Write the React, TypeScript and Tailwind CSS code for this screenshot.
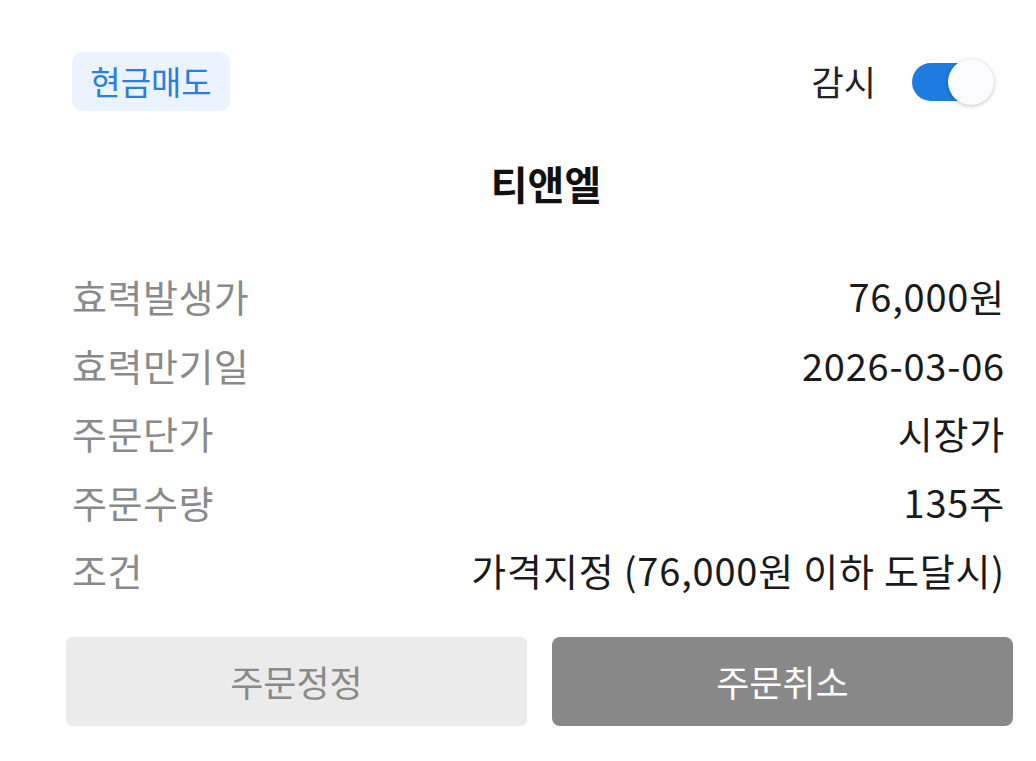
import React, { useState } from "react";

const rows: { label: string; value: string }[] = [
  { label: "효력발생가", value: "76,000원" },
  { label: "효력만기일", value: "2026-03-06" },
  { label: "주문단가", value: "시장가" },
  { label: "주문수량", value: "135주" },
  { label: "조건", value: "가격지정 (76,000원 이하 도달시)" },
];

const App: React.FC = () => {
  const [watch, setWatch] = useState(true);

  return (
    <div
      className="min-h-screen w-[1036px] bg-white pt-[52px]"
      style={{ fontFamily: '"Noto Sans CJK KR", "Noto Sans", sans-serif' }}
    >
      {/* header */}
      <div className="ml-[72px] mr-[40px] flex h-[59px] items-center justify-between">
        <span className="flex h-[59px] w-[158px] items-center justify-center rounded-[10px] bg-[#ebf4fe] text-[33px] text-[#2a7de1]">
          현금매도
        </span>
        <div className="flex items-center">
          <span className="mr-[35px] text-[35px] text-[#222]">감시</span>
          <button
            onClick={() => setWatch(!watch)}
            className="relative h-[46px] w-[85px]"
          >
            <span
              className={`absolute left-[1px] top-[4px] h-[38px] w-[76px] rounded-full ${
                watch ? "bg-[#1e7be0]" : "bg-[#c8c8c8]"
              }`}
            />
            <span
              className={`absolute top-0 h-[46px] w-[46px] rounded-full bg-[#fbfbfd] shadow-[0_1px_4px_rgba(0,0,0,0.25)] ${
                watch ? "left-[37px]" : "left-0"
              }`}
            />
          </button>
        </div>
      </div>

      {/* title */}
      <h1 className="ml-[72px] mr-[31px] mt-[42px] h-[60px] pl-[15px] text-center text-[40px] font-bold leading-[60px] text-[#111]">
        티앤엘
      </h1>

      {/* info rows */}
      <div className="ml-[72px] mr-[31px] mt-[49px]">
        {rows.map((r) => (
          <div
            key={r.label}
            className="flex h-[68.5px] items-center justify-between text-[38px] leading-[68.5px]"
          >
            <span className="tracking-[0.5px] text-[#8a8a8a]">{r.label}</span>
            <span className="tracking-[0.8px] text-[#1a1a1a]">{r.value}</span>
          </div>
        ))}
      </div>

      {/* buttons */}
      <div className="ml-[66px] mr-[23px] mt-[32px] flex gap-[25px]">
        <button className="h-[89px] flex-1 rounded-[6px] bg-[#ebebeb] text-[36px] text-[#8a8a8a]">
          주문정정
        </button>
        <button className="h-[89px] flex-1 rounded-[8px] bg-[#888888] text-[36px] text-white">
          주문취소
        </button>
      </div>
    </div>
  );
};

export default App;
